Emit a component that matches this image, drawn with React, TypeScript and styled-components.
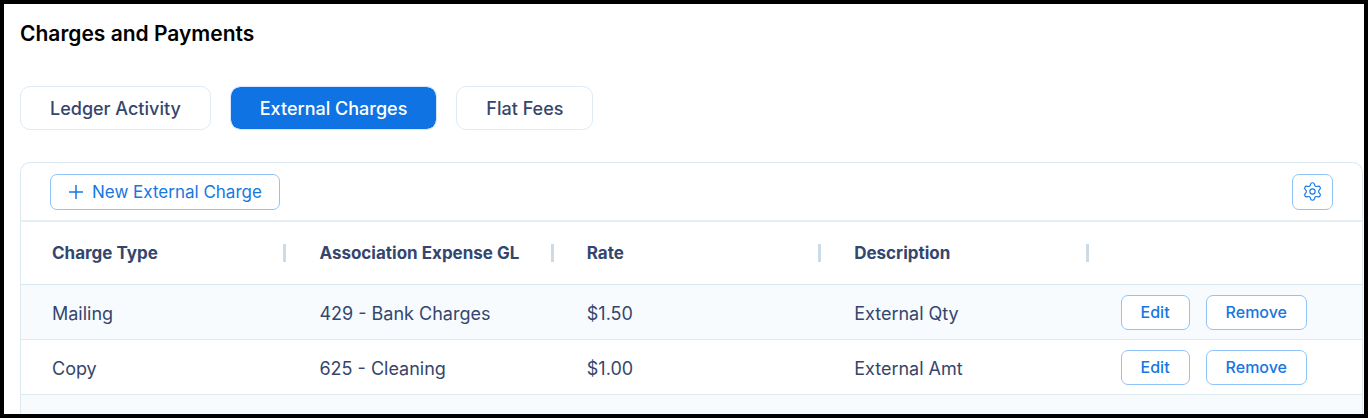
import React from 'react';
import styled, { createGlobalStyle } from 'styled-components';
import { Settings } from 'lucide-react';

const GlobalStyle = createGlobalStyle`
  * { box-sizing: border-box; }
  body { margin: 0; background: #fff; }
  button, table { font: inherit; color: inherit; }
`;

const Frame = styled.main`
  display: flex;
  flex-direction: column;
  min-height: 100vh;
  padding: 16px 1px 0 16px;
  border: 4px solid #000;
  background: #fff;
  color: #34466d;
  font-family: Inter, 'Liberation Sans', sans-serif;
  font-size: 18px;
`;

const Title = styled.h1`
  margin: 0;
  color: #000;
  font-size: 21px;
  font-weight: 600;
  line-height: 28px;
`;

const Tabs = styled.nav`
  display: flex;
  flex-wrap: wrap;
  gap: 19px;
  padding: 38px 0 32px;
`;

const Tab = styled.button<{ $active?: boolean }>`
  height: 44px;
  padding: 0 29px;
  border: 1px solid ${(p) => (p.$active ? '#d6e8fb' : '#e0eaf2')};
  border-radius: 10px;
  background: ${(p) => (p.$active ? '#0f73e3' : '#fff')};
  background-clip: padding-box;
  color: ${(p) => (p.$active ? '#fff' : '#34466d')};
  font-size: 18px;
  font-weight: 500;
  white-space: nowrap;
`;

const Card = styled.section`
  display: flex;
  flex: 1;
  flex-direction: column;
  overflow: hidden;
  border: 1px solid #dde9f0;
  border-bottom: 0;
  border-radius: 10px 10px 0 0;
`;

const Toolbar = styled.div`
  display: flex;
  align-items: center;
  justify-content: space-between;
  height: 59px;
  padding: 0 29px;
  border-bottom: 2px solid #e6eff4;
`;

const OutlineButton = styled.button<{ $size?: 'tool' | 'row' }>`
  display: inline-flex;
  align-items: center;
  justify-content: center;
  gap: 8px;
  height: ${(p) => (p.$size === 'tool' ? 36 : 35)}px;
  padding: 0 ${(p) => (p.$size === 'tool' ? 17 : 19)}px;
  border: 1px solid #90c3f7;
  border-radius: 7px;
  background: #fff;
  color: #1677e2;
  font-size: ${(p) => (p.$size === 'tool' ? 17 : 16)}px;
  font-weight: ${(p) => (p.$size === 'tool' ? 400 : 500)};
  white-space: nowrap;
`;

const IconButton = styled(OutlineButton)`
  width: 41px;
  padding: 0;
`;

const Table = styled.table`
  width: 100%;
  border-collapse: separate;
  border-spacing: 0;
  table-layout: fixed;
`;

const HeadCell = styled.th`
  width: 19.94%;
  height: 63px;
  padding: 0 0 0 31px;
  border-bottom: 1px solid #dae6ee;
  font-size: 17px;
  font-weight: 700;
  text-align: left;
  white-space: nowrap;

  &:last-child { width: auto; }
`;

const HeadContent = styled.span`
  display: flex;
  align-items: center;
  justify-content: space-between;
  height: 18px;
  margin-right: 2px;
  border-right: 3px solid #cddbe7;
`;

const Row = styled.tr`
  background: #fff;
  &:nth-child(odd) { background: #f7fbfe; }
`;

const Cell = styled.td`
  height: 55px;
  padding: 2px 0 0 31px;
  border-bottom: 1px solid #dfe9f0;
  white-space: nowrap;
`;

const ActionCell = styled(Cell)`
  padding: 0 0 0 30px;
`;

const Actions = styled.div`
  display: flex;
  gap: 16px;
`;

const NextRow = styled.div`
  flex: 1;
  min-height: 19px;
  background: #f7fbfe;
`;

const PlusIcon = () => (
  <svg width="16" height="16" viewBox="0 0 16 16" fill="none" stroke="currentColor" strokeWidth="1.5" aria-hidden="true">
    <path d="M8 1v14M1 8h14" />
  </svg>
);

const columns = ['Charge Type', 'Association Expense GL', 'Rate', 'Description'];
const charges = [
  { type: 'Mailing', gl: '429 - Bank Charges', rate: '$1.50', description: 'External Qty' },
  { type: 'Copy', gl: '625 - Cleaning', rate: '$1.00', description: 'External Amt' },
];

export default function App() {
  return (
    <>
      <GlobalStyle />
      <Frame>
        <Title>Charges and Payments</Title>
        <Tabs>
          <Tab type="button">Ledger Activity</Tab>
          <Tab type="button" $active aria-current="page">External Charges</Tab>
          <Tab type="button">Flat Fees</Tab>
        </Tabs>
        <Card>
          <Toolbar>
            <OutlineButton type="button" $size="tool">
              <PlusIcon />
              New External Charge
            </OutlineButton>
            <IconButton type="button" $size="tool" aria-label="Table settings">
              <Settings size={21} strokeWidth={1.3} aria-hidden="true" />
            </IconButton>
          </Toolbar>
          <Table>
            <thead>
              <tr>
                {columns.map((name) => (
                  <HeadCell key={name} scope="col">
                    <HeadContent>{name}</HeadContent>
                  </HeadCell>
                ))}
                <HeadCell aria-label="Actions" />
              </tr>
            </thead>
            <tbody>
              {charges.map((charge) => (
                <Row key={charge.type}>
                  <Cell>{charge.type}</Cell>
                  <Cell>{charge.gl}</Cell>
                  <Cell>{charge.rate}</Cell>
                  <Cell>{charge.description}</Cell>
                  <ActionCell>
                    <Actions>
                      <OutlineButton type="button">Edit</OutlineButton>
                      <OutlineButton type="button">Remove</OutlineButton>
                    </Actions>
                  </ActionCell>
                </Row>
              ))}
            </tbody>
          </Table>
          <NextRow />
        </Card>
      </Frame>
    </>
  );
}
